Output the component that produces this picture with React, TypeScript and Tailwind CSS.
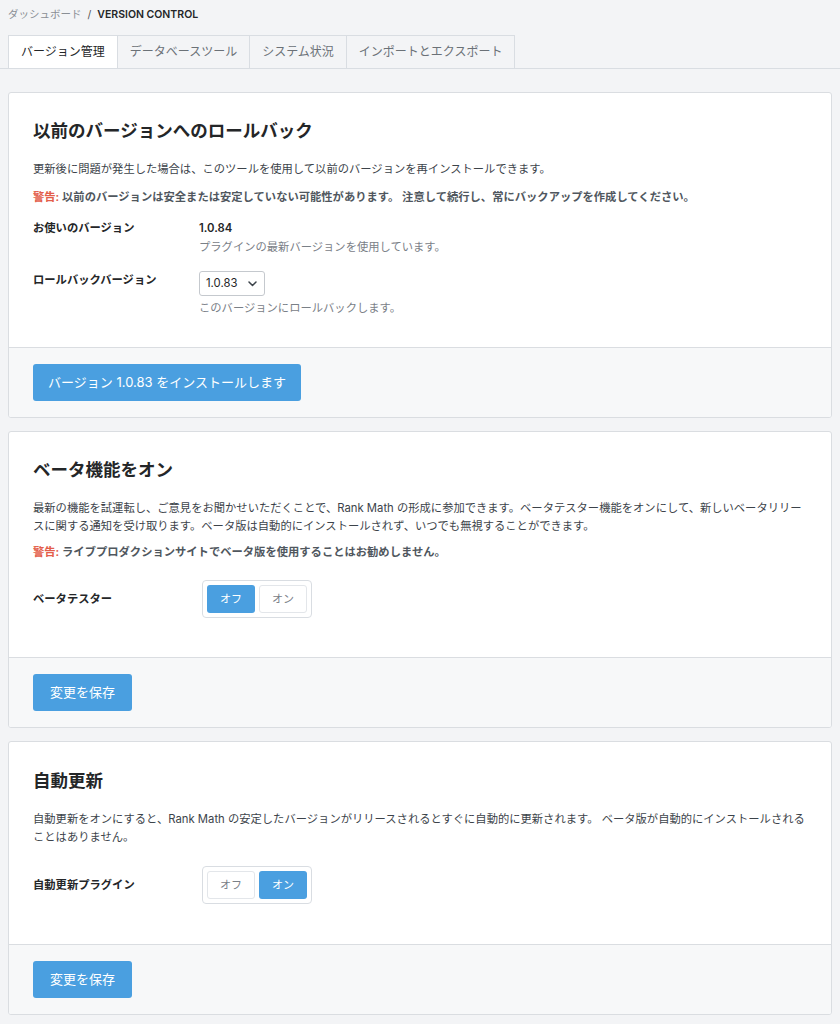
import React from "react";

const FONT = { fontFamily: 'Inter, "Noto Sans CJK JP", sans-serif' };

function Toggle({ on }: { on: boolean }) {
  const active = "w-[48px] h-[28px] rounded-[3px] bg-[#4a9fe0] text-white flex items-center justify-center text-[11px]";
  const inactive = "w-[48px] h-[28px] rounded-[3px] bg-white border border-[#e3e6ea] text-[#7a8087] flex items-center justify-center text-[11px]";
  return (
    <div className="ml-[3px] flex gap-[4px] p-[4px] border border-[#d9dde2] rounded-[4px] bg-white">
      <div className={on ? inactive : active}>オフ</div>
      <div className={on ? active : inactive}>オン</div>
    </div>
  );
}

function Footer({ label, width }: { label: string; width: string }) {
  return (
    <div className="border-t border-[#dadde1] bg-[#f7f8f9] px-6 pt-[16px] pb-[16px]">
      <div className={`h-[37px] ${width} rounded-[3px] bg-[#4a9fe0] text-white text-[13px] flex items-center justify-center`}>
        {label}
      </div>
    </div>
  );
}

export default function App() {
  const tabs = ["バージョン管理", "データベースツール", "システム状況", "インポートとエクスポート"];
  return (
    <div className="min-h-screen bg-[#f3f4f6] text-[#242628] pb-4" style={FONT}>
      <div className="px-2 pt-[7px] text-[10.5px] leading-[15px] flex items-center gap-[6px]">
        <span className="text-[#8a8f95]">ダッシュボード</span>
        <span className="text-[#555]">/</span>
        <span className="font-semibold text-[#242628]">VERSION CONTROL</span>
      </div>

      <div className="mt-[13px] border-b border-[#d9dde2]">
        <div className="px-2 flex">
          {tabs.map((t, i) => (
            <div
              key={t}
              className={`h-[33px] px-[12px] flex items-center text-[12px] border-t border-r border-[#d9dde2] ${i === 0 ? "border-l bg-white text-[#242628]" : "bg-[#f3f4f6] text-[#6b7177]"}`}
            >
              {t}
            </div>
          ))}
        </div>
      </div>

      {/* Card 1 */}
      <div className="mx-2 mt-[23px] border border-[#dadde1] rounded-[3px] bg-white overflow-hidden">
        <div className="px-6 pt-[26px] pb-[30px]">
          <h2 className="text-[17.5px] leading-[24px] font-semibold">以前のバージョンへのロールバック</h2>
          <p className="mt-[17px] text-[11.3px] leading-[18px] text-[#3c434a]">
            更新後に問題が発生した場合は、このツールを使用して以前のバージョンを再インストールできます。
          </p>
          <p className="mt-[10px] text-[11.3px] leading-[18px] font-semibold text-[#50575e]">
            <span className="text-[#e35d4a]">警告:</span> 以前のバージョンは安全または安定していない可能性があります。 注意して続行し、常にバックアップを作成してください。
          </p>
          <div className="mt-[13px] flex">
            <div className="w-[166px] text-[11.3px] leading-[18px] font-semibold">お使いのバージョン</div>
            <div>
              <div className="text-[11.3px] leading-[18px] font-semibold">1.0.84</div>
              <div className="mt-[1px] text-[11.3px] leading-[18px] text-[#7a8087]">プラグインの最新バージョンを使用しています。</div>
            </div>
          </div>
          <div className="mt-[15px] flex">
            <div className="w-[166px] text-[11.3px] leading-[18px] font-semibold">ロールバックバージョン</div>
            <div>
              <div className="w-[66px] h-[25px] border border-[#c5c9ce] rounded-[3px] flex items-center justify-between pl-[6px] pr-[7px] text-[11.3px] text-[#242628]">
                <span>1.0.83</span>
                <svg width="9" height="6" viewBox="0 0 9 6" fill="none">
                  <path d="M1 1l3.5 3.5L8 1" stroke="#3c434a" strokeWidth="1.5" strokeLinecap="round" strokeLinejoin="round" />
                </svg>
              </div>
              <div className="mt-[3px] text-[11.3px] leading-[18px] text-[#7a8087]">このバージョンにロールバックします。</div>
            </div>
          </div>
        </div>
        <Footer label="バージョン 1.0.83 をインストールします" width="w-[268px]" />
      </div>

      {/* Card 2 */}
      <div className="mx-2 mt-[13px] border border-[#dadde1] rounded-[3px] bg-white overflow-hidden">
        <div className="px-6 pt-[26px] pb-[39px]">
          <h2 className="text-[17.5px] leading-[24px] font-semibold">ベータ機能をオン</h2>
          <p className="mt-[17px] text-[11.3px] leading-[18px] text-[#3c434a]">
            <span className="block whitespace-nowrap">最新の機能を試運転し、ご意見をお聞かせいただくことで、Rank Math の形成に参加できます。ベータテスター機能をオンにして、新しいベータリリー</span>
            <span className="block whitespace-nowrap">スに関する通知を受け取ります。ベータ版は自動的にインストールされず、いつでも無視することができます。</span>
          </p>
          <p className="mt-[8px] text-[11.3px] leading-[18px] font-semibold text-[#50575e]">
            <span className="text-[#e35d4a]">警告:</span> ライブプロダクションサイトでベータ版を使用することはお勧めしません。
          </p>
          <div className="mt-[19px] flex items-center">
            <div className="w-[166px] text-[11.3px] leading-[18px] font-semibold">ベータテスター</div>
            <Toggle on={false} />
          </div>
        </div>
        <Footer label="変更を保存" width="w-[99px]" />
      </div>

      {/* Card 3 */}
      <div className="mx-2 mt-[13px] border border-[#dadde1] rounded-[3px] bg-white overflow-hidden">
        <div className="px-6 pt-[27px] pb-[40px]">
          <h2 className="text-[17.5px] leading-[24px] font-semibold">自動更新</h2>
          <p className="mt-[17px] text-[11.3px] leading-[18px] text-[#3c434a]">
            <span className="block whitespace-nowrap">自動更新をオンにすると、Rank Math の安定したバージョンがリリースされるとすぐに自動的に更新されます。 ベータ版が自動的にインストールされる</span>
            <span className="block whitespace-nowrap">ことはありません。</span>
          </p>
          <div className="mt-[20px] flex items-center">
            <div className="w-[166px] text-[11.3px] leading-[18px] font-semibold">自動更新プラグイン</div>
            <Toggle on={true} />
          </div>
        </div>
        <Footer label="変更を保存" width="w-[99px]" />
      </div>
    </div>
  );
}
